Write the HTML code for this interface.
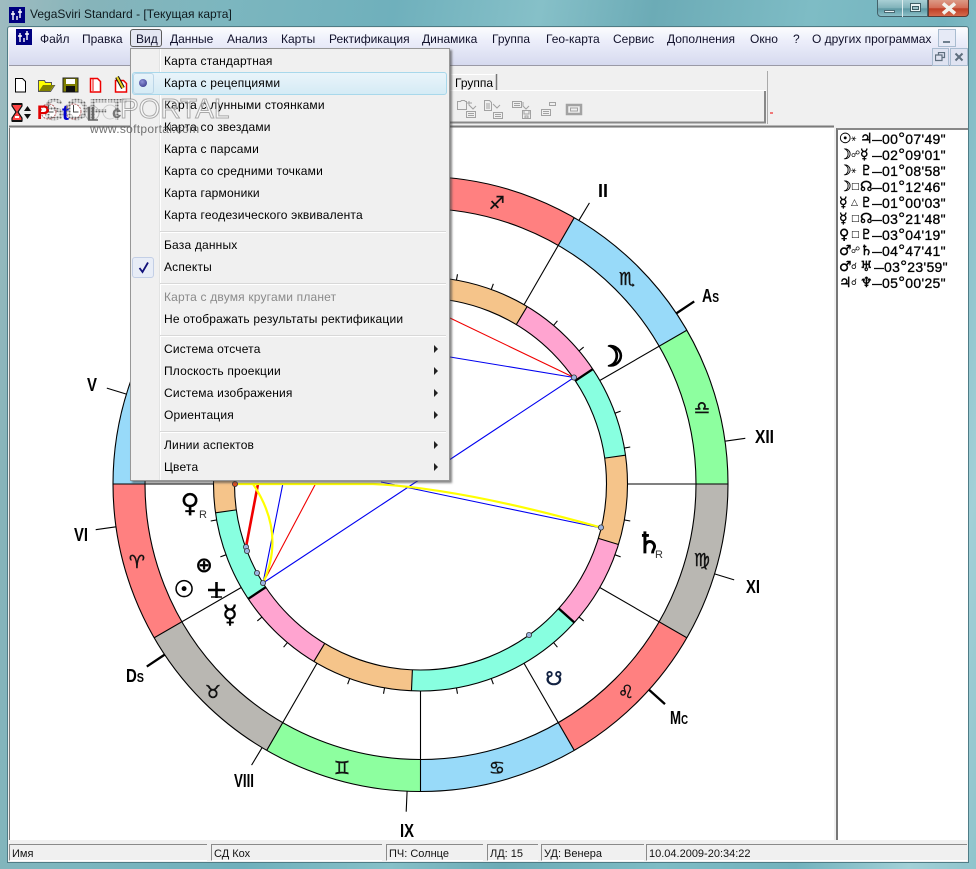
<!DOCTYPE html>
<html><head><meta charset="utf-8"><title>VegaSviri Standard</title>
<style>
html,body{margin:0;padding:0}
body{width:976px;height:869px;overflow:hidden;position:relative;font:12px "Liberation Sans","DejaVu Sans",sans-serif;color:#000;
background:linear-gradient(100deg,#9fbcc0 0,#86b4ba 8%,#7cb6bf 20%,#6fb0bc 35%,#86c0c8 48%,#6cabb6 58%,#7ebcc5 72%,#72b2bd 84%,#a2d0d7 94%,#8fc4cc 100%)}
.a{position:absolute;white-space:nowrap}
#client{left:8px;top:27px;width:960px;height:835px;background:#f0f0f0;box-shadow:0 0 0 1px #4f7c86;border-radius:2px 2px 0 0}
#menubar{left:9px;top:28px;width:958px;height:37px;background:linear-gradient(#fbfcfe 0,#eceefa 35%,#d6daef 100%);border-bottom:1px solid #9a9aa6}
.m{top:32px;line-height:14px;color:#10102a}
#content{left:10px;top:128px;width:824px;height:712px;background:#fff;box-shadow:-1px 0 0 #777}
#panel{left:836px;top:128px;background:#fff;border-left:2px solid #777;border-top:2px solid #888;width:130px;height:710px}
.st{top:844px;height:17px;line-height:18px;font-size:11px;background:#f0f0f0;border-top:1px solid #8a8a8a;border-left:1px solid #8a8a8a;border-bottom:1px solid #fff;padding-left:2px;box-sizing:border-box;color:#111}
#menu{left:130px;top:48px;width:318px;height:431px;background:#f0f0f0;border:1px solid #979797;box-shadow:2px 2px 2px rgba(70,70,70,.65)}
.i{left:164px;line-height:14px;color:#000;letter-spacing:.18px}
.sep{left:160px;width:286px;height:1px;background:#d8d8d8;border-bottom:1px solid #fff}
.arr{left:434px;width:0;height:0;border-left:4px solid #222;border-top:4px solid transparent;border-bottom:4px solid transparent}
.row{left:839px;height:16px;line-height:16px;font-size:14px;letter-spacing:.3px;color:#000;-webkit-text-stroke:.3px #000}
.p,.g{position:absolute;top:0;font-family:"DejaVu Sans",sans-serif;letter-spacing:0}
.p{font-size:14px;font-weight:bold;-webkit-text-stroke:.4px #000}
.g{font-size:9px;-webkit-text-stroke:0}
.t{position:absolute;left:33px;top:0}
.t b{display:inline-block;width:10px;overflow:hidden;font-weight:normal;vertical-align:top}
.t i{font-style:normal;font-size:17px;line-height:16px;vertical-align:top}
svg{position:absolute;overflow:hidden}
</style></head>
<body>
<!-- window title -->
<div class="a" id="client"></div>
<svg style="left:9px;top:7px" width="16" height="16"><rect width="16" height="16" fill="#000080"/><path d="M4 4v9M2 7h4M11 2v9M9 5h4M8 9v4" stroke="#fff" stroke-width="1.4"/></svg>
<div class="a" style="left:30px;top:7px;line-height:14px;color:#0e1a1e">VegaSviri Standard - [Текущая карта]</div>
<!-- caption buttons -->
<div class="a" style="left:877px;top:-1px;width:51px;height:18px;border:1px solid #43626a;border-radius:0 0 0 4px;box-sizing:border-box;background:linear-gradient(#a9cfd5,#80b2ba 50%,#5d98a3 55%,#8cc0c8)"></div>
<div class="a" style="left:902px;top:0;width:1px;height:17px;background:#dcecee"></div>
<div class="a" style="left:884px;top:10px;width:11px;height:3px;background:#e8f2f4;border:1px solid #4a6a72;box-sizing:border-box"></div>
<div class="a" style="left:910px;top:3px;width:11px;height:9px;border:1px solid #3e5e66;box-sizing:border-box;background:#e9f3f5"></div>
<div class="a" style="left:912px;top:6px;width:7px;height:4px;border:1px solid #3e5e66;box-sizing:border-box;background:#9cc2c9"></div>
<div class="a" style="left:928px;top:-1px;width:41px;height:18px;border:1px solid #5b3a34;border-radius:0 0 4px 0;box-sizing:border-box;background:linear-gradient(#dc9a86,#d4705a 48%,#bf3f26 55%,#d56a4c)"></div>
<svg style="left:940px;top:2px" width="18" height="13"><path d="M3 1.5L15 11.5M15 1.5L3 11.5" stroke="#f2f2ec" stroke-width="3.6"/></svg>

<!-- menu bar -->
<div class="a" id="menubar"></div>
<svg style="left:16px;top:29px" width="16" height="16"><rect width="16" height="16" fill="#000080"/><path d="M4 4v9M2 7h4M11 2v9M9 5h4M8 9v4" stroke="#fff" stroke-width="1.4"/></svg>
<div class="a m" style="left:40px">Файл</div>
<div class="a m" style="left:82px">Правка</div>
<div class="a" style="left:130px;top:29px;width:32px;height:18px;box-sizing:border-box;border:1px solid #5a5a5a;border-radius:3px;background:#e4e6f2"></div>
<div class="a m" style="left:136px">Вид</div>
<div class="a m" style="left:170px">Данные</div>
<div class="a m" style="left:227px">Анализ</div>
<div class="a m" style="left:281px">Карты</div>
<div class="a m" style="left:329px">Ректификация</div>
<div class="a m" style="left:422px">Динамика</div>
<div class="a m" style="left:492px">Группа</div>
<div class="a m" style="left:546px">Гео-карта</div>
<div class="a m" style="left:613px">Сервис</div>
<div class="a m" style="left:667px">Дополнения</div>
<div class="a m" style="left:750px">Окно</div>
<div class="a m" style="left:793px">?</div>
<div class="a m" style="left:812px">О других программах</div>
<!-- MDI buttons -->
<div class="a" style="left:938px;top:29px;width:18px;height:18px;box-sizing:border-box;border:1px solid #a9bcd0;background:#e6eaf6"></div>
<div class="a" style="left:943px;top:41px;width:7px;height:2px;background:#6e7f8e"></div>
<div class="a" style="left:932px;top:48px;width:17px;height:18px;box-sizing:border-box;border:1px solid #a9bcd0;background:#dfe3f1"></div>
<svg style="left:935px;top:52px" width="11" height="10"><path d="M3.5 2.5V.5h6v5h-2M.5 3h6.500v5.500h-6.500z" fill="none" stroke="#5f6f7e" stroke-width="1.200"/></svg>
<div class="a" style="left:950px;top:48px;width:18px;height:18px;box-sizing:border-box;border:1px solid #a9bcd0;background:#dfe3f1"></div>
<svg style="left:954px;top:52px" width="10" height="10"><path d="M1.500 1.500L8.500 8.500M8.500 1.500L1.500 8.500" stroke="#5f6f7e" stroke-width="2"/></svg>

<!-- toolbars -->
<svg style="left:0;top:66px" width="976" height="64">
 <path d="M15.500 12.500h7l3 3v10.500h-10z" fill="#fff" stroke="#000"/>
 <path d="M38.500 14.500h6l1 2h6v3h3l-4 6h-12z" fill="#ff0" stroke="#555"/><path d="M39 25l4-6h11l-4 6z" fill="#808000"/>
 <rect x="63" y="12" width="15" height="14" fill="#808000" stroke="#222"/><rect x="66" y="13" width="9" height="5" fill="#fff"/><rect x="66" y="20" width="9" height="6" fill="#111"/>
 <path d="M90.500 12.500h7l3 3v10.500h-10z" fill="#fff" stroke="#e00" stroke-width="1.500"/><path d="M93 13v12" stroke="#e00"/>
 <path d="M115.500 14.500h8l3 3v8.500h-11z" fill="#fff" stroke="#e00" stroke-width="1.500"/><path d="M117 11l6 11" stroke="#111" stroke-width="4"/><path d="M117 11l6 11" stroke="#e8d020" stroke-width="2"/>
 <path d="M12 38h10v2l-4 6 4 6v3H12v-3l4-6-4-6z" fill="#f44" stroke="#111" stroke-width="1.200"/><path d="M12 38h10M12 55h10" stroke="#111" stroke-width="2"/><path d="M15 50h4v2h-4z" fill="#fff"/>
 <path d="M24 45l3.500-5 3.500 5zM24 48l3.500 5 3.500-5z" fill="#111"/>
 <circle cx="48.500" cy="45.500" r="7.500" fill="#fff" stroke="#b06060" stroke-dasharray="2 1"/><path d="M48.500 39v7h5" stroke="#444" fill="none"/>
 <circle cx="73.500" cy="45.500" r="7.500" fill="#fff" stroke="#b06060" stroke-dasharray="2 1"/><path d="M73.500 39v7h5" stroke="#444" fill="none"/>
 <circle cx="92" cy="47" r="7" fill="none" stroke="#bbb"/><path d="M89 41v13M93 41v13" stroke="#666" stroke-width="2.500"/><path d="M88 54h10" stroke="#666" stroke-width="1.500"/>
 <circle cx="110" cy="46" r="7" fill="none" stroke="#ccc"/>
 <path d="M451 8.500h45" stroke="#fff"/><path d="M496.500 8v17" stroke="#777" stroke-width="1.500"/>
 <path d="M450 24.500h316" stroke="#fff"/><path d="M765 25v32" stroke="#888" stroke-width="2"/><path d="M450 56.500h316" stroke="#888" stroke-width="2"/>
 <path d="M767.500 5v53" stroke="#aaa"/><path d="M770 47h3" stroke="#e00"/>
 <path d="M9 60.500h825" stroke="#7a7a7a" stroke-width="2"/>
 <g fill="none" stroke="#a2a2a2">
  <path d="M457.500 35.500h3l1-1h3l1 1h1v8h-9zM469 35v4l4 4l3-3M467 37h5" />
  <rect x="466.500" y="45.500" width="9" height="6"/><path d="M468 47.500h6M468 49.500h6"/>
  <path d="M484.500 34.500h5l2 2v8h-7zM486 38h4M486 40h4M486 42h4M493 38l4 4 3-3"/>
  <rect x="493.500" y="46.500" width="9" height="6"/><path d="M495 48.500h6M495 50.500h6"/>
  <rect x="512.500" y="35.500" width="9" height="6"/><path d="M514 37.500h6M514 39.500h6M523 36v4l3 3 3-3"/>
  <rect x="522.500" y="44.500" width="8" height="8"/><path d="M524 45v3h5v-3M525 50h3v2h-3z"/>
  <rect x="541.500" y="43.500" width="9" height="6"/><path d="M543 45.500h6M543 47.500h6"/><rect x="549.500" y="36.500" width="6" height="3"/>
 </g>
 <rect x="567" y="39" width="14" height="9" fill="none" stroke="#a2a2a2" stroke-width="2.500"/><rect x="570.500" y="42" width="7" height="3" fill="none" stroke="#a2a2a2"/>
</svg>
<div class="a" style="left:37px;top:103px;font:bold 19px 'Liberation Sans',sans-serif;color:#e00000">P</div>
<div class="a" style="left:62px;top:102px;font:bold 21px 'Liberation Sans',sans-serif;color:#0000d0">t</div>
<div class="a" style="left:112px;top:103px;font:bold 17px 'Liberation Sans',sans-serif;color:#777">c</div>
<div class="a" style="left:455px;top:76px;line-height:14px">Группа</div>

<!-- chart -->
<div class="a" id="content"></div>
<svg style="left:10px;top:128px" width="824" height="712" viewBox="10 128 824 712">
 <g transform="translate(420.500 484)" fill="none">
  <g stroke-width="32" >
   <circle r="291.500" pathLength="360" stroke-dasharray="30 330" stroke="#8dff9f" transform="rotate(-30)"/>
   <circle r="291.500" pathLength="360" stroke-dasharray="30 330" stroke="#98daf9" transform="rotate(-60)"/>
   <circle r="291.500" pathLength="360" stroke-dasharray="30 330" stroke="#ff8080" transform="rotate(-90)"/>
   <circle r="291.500" pathLength="360" stroke-dasharray="30 330" stroke="#b9b7b2" transform="rotate(-120)"/>
   <circle r="291.500" pathLength="360" stroke-dasharray="30 330" stroke="#8dff9f" transform="rotate(-150)"/>
   <circle r="291.500" pathLength="360" stroke-dasharray="30 330" stroke="#98daf9" transform="rotate(-180)"/>
   <circle r="291.500" pathLength="360" stroke-dasharray="30 330" stroke="#ff8080" transform="rotate(-210)"/>
   <circle r="291.500" pathLength="360" stroke-dasharray="30 330" stroke="#b9b7b2" transform="rotate(-240)"/>
   <circle r="291.500" pathLength="360" stroke-dasharray="30 330" stroke="#8dff9f" transform="rotate(-270)"/>
   <circle r="291.500" pathLength="360" stroke-dasharray="30 330" stroke="#98daf9" transform="rotate(-300)"/>
   <circle r="291.500" pathLength="360" stroke-dasharray="30 330" stroke="#ff8080" transform="rotate(-330)"/>
   <circle r="291.500" pathLength="360" stroke-dasharray="30 330" stroke="#b9b7b2" transform="rotate(-360)"/>
  </g>
  <g stroke-width="21">
   <circle r="196.500" pathLength="360" stroke-dasharray="25.700 334.300" stroke="#88ffe0" transform="rotate(-33.700)"/>
   <circle r="196.500" pathLength="360" stroke-dasharray="25.300 334.700" stroke="#ffa4d0" transform="rotate(-59)"/>
   <circle r="196.500" pathLength="360" stroke-dasharray="28.500 331.500" stroke="#f5c48a" transform="rotate(-87.500)"/>
   <circle r="196.500" pathLength="360" stroke-dasharray="50.500 309.500" stroke="#88ffe0" transform="rotate(-138)"/>
   <circle r="196.500" pathLength="360" stroke-dasharray="25 335" stroke="#ffa4d0" transform="rotate(-163)"/>
   <circle r="196.500" pathLength="360" stroke-dasharray="25 335" stroke="#f5c48a" transform="rotate(-188)"/>
   <circle r="196.500" pathLength="360" stroke-dasharray="25.700 334.300" stroke="#88ffe0" transform="rotate(-213.700)"/>
   <circle r="196.500" pathLength="360" stroke-dasharray="25.300 334.700" stroke="#ffa4d0" transform="rotate(-239)"/>
   <circle r="196.500" pathLength="360" stroke-dasharray="28.500 331.500" stroke="#f5c48a" transform="rotate(-267.500)"/>
   <circle r="196.500" pathLength="360" stroke-dasharray="50.500 309.500" stroke="#88ffe0" transform="rotate(-318)"/>
   <circle r="196.500" pathLength="360" stroke-dasharray="25 335" stroke="#ffa4d0" transform="rotate(-343)"/>
   <circle r="196.500" pathLength="360" stroke-dasharray="25 335" stroke="#f5c48a" transform="rotate(-368)"/>
  </g>
  <g stroke="#000" stroke-width="1.100">
   <circle r="307.500"/><circle r="275.500"/><circle r="207"/><circle r="186"/>
   <path d="M207 0H307.500"/>
   <path d="M207 0H307.500" transform="rotate(-30)"/><path d="M207 0H307.500" transform="rotate(-60)"/><path d="M207 0H307.500" transform="rotate(-90)"/>
   <path d="M207 0H307.500" transform="rotate(-120)"/><path d="M207 0H307.500" transform="rotate(-150)"/><path d="M207 0H307.500" transform="rotate(-180)"/>
   <path d="M207 0H307.500" transform="rotate(-210)"/><path d="M207 0H307.500" transform="rotate(-240)"/><path d="M207 0H307.500" transform="rotate(-270)"/>
   <path d="M207 0H307.500" transform="rotate(-300)"/><path d="M207 0H307.500" transform="rotate(-330)"/>
   <path d="M186 0H207M307.500 0H328" transform="rotate(-8)"/>
   <path d="M186 0H207M307.500 0H328" transform="rotate(-59)"/>
   <path d="M186 0H207M307.500 0H328" transform="rotate(-87.500)"/>
   <path d="M186 0H207M307.500 0H328" transform="rotate(-163)"/>
   <path d="M186 0H207M307.500 0H328" transform="rotate(-188)"/>
   <path d="M186 0H207M307.500 0H328" transform="rotate(-239)"/>
   <path d="M186 0H207M307.500 0H328" transform="rotate(-267.500)"/>
   <path d="M186 0H207M307.500 0H328" transform="rotate(-343)"/>
   <g stroke-width="2.300">
    <path d="M186 0H207M307.500 0H329" transform="rotate(-33.700)"/>
    <path d="M186 0H207M307.500 0H329" transform="rotate(-138)"/>
    <path d="M186 0H207M307.500 0H329" transform="rotate(-213.700)"/>
    <path d="M186 0H207M307.500 0H329" transform="rotate(-318)"/>
   </g>
   <path d="M207 0H213" transform="rotate(-10)"/><path d="M207 0H213" transform="rotate(-20)"/><path d="M207 0H213" transform="rotate(-40)"/><path d="M207 0H213" transform="rotate(-50)"/>
   <path d="M207 0H213" transform="rotate(-70)"/><path d="M207 0H213" transform="rotate(-80)"/><path d="M207 0H213" transform="rotate(-100)"/><path d="M207 0H213" transform="rotate(-110)"/>
   <path d="M207 0H213" transform="rotate(-130)"/><path d="M207 0H213" transform="rotate(-140)"/><path d="M207 0H213" transform="rotate(-160)"/><path d="M207 0H213" transform="rotate(-170)"/>
   <path d="M207 0H213" transform="rotate(-190)"/><path d="M207 0H213" transform="rotate(-200)"/><path d="M207 0H213" transform="rotate(-220)"/><path d="M207 0H213" transform="rotate(-230)"/>
   <path d="M207 0H213" transform="rotate(-250)"/><path d="M207 0H213" transform="rotate(-260)"/><path d="M207 0H213" transform="rotate(-280)"/><path d="M207 0H213" transform="rotate(-290)"/>
   <path d="M207 0H213" transform="rotate(-310)"/><path d="M207 0H213" transform="rotate(-320)"/><path d="M207 0H213" transform="rotate(-340)"/><path d="M207 0H213" transform="rotate(-350)"/>
  </g>
 </g>
 <!-- aspect lines -->
 <g fill="none">
  <path d="M574 377.500L263 583M574 377.500L450 357M381 482L601 528M263 583L283 483" stroke="#0000f0" stroke-width="1.100"/>
  <path d="M574 377.500L450 318M263 583L316 483" stroke="#f00000" stroke-width="1.100"/>
  <path d="M246 547L258 484" stroke="#f00000" stroke-width="2.600"/>
  <path d="M263 583Q286 533 253 484M238 484H373Q460 488 601 527.500" stroke="#ffff00" stroke-width="2.200"/>
 </g>
 <g fill="#9cb4e0" stroke="#333" stroke-width=".8">
  <circle cx="574" cy="377.500" r="2.600"/><circle cx="601" cy="527.500" r="2.600"/><circle cx="529" cy="635" r="2.600"/>
  <circle cx="263" cy="583" r="2.600"/><circle cx="257" cy="573" r="2.600"/><circle cx="246" cy="547" r="2.600"/><circle cx="247" cy="551" r="2.600"/>
  <circle cx="235" cy="484" r="2.600" fill="#e05020"/>
 </g>
 <!-- sign glyphs -->
 <g font-family="'DejaVu Sans',sans-serif" font-size="18" text-anchor="middle" fill="#111" stroke="#111" stroke-width=".4">
  <text x="497" y="209">♐&#xFE0E;</text><text x="627" y="285">♏&#xFE0E;</text><text x="702" y="414">♎&#xFE0E;</text>
  <text x="702" y="566">♍&#xFE0E;</text><text x="626" y="698">♌&#xFE0E;</text><text x="497" y="774">♋&#xFE0E;</text>
  <text x="342" y="774">♊&#xFE0E;</text><text x="213" y="698">♉&#xFE0E;</text><text x="137" y="568">♈&#xFE0E;</text>
 </g>
 <!-- planets -->
 <g font-family="'DejaVu Sans',sans-serif" text-anchor="middle" fill="#000" stroke="#000" font-weight="bold">
  <text x="611" y="366" font-size="28" stroke-width="1.600">☽&#xFE0E;</text>
  <text x="649" y="553" font-size="29" stroke-width=".8">♄&#xFE0E;</text>
  <text x="190" y="512" font-size="26" stroke-width=".3">♀&#xFE0E;</text>
  <text x="204" y="572" font-size="21" stroke-width=".2">⊕</text>
  <text x="184" y="597" font-size="23" stroke-width=".7">☉&#xFE0E;</text>
  <text x="230" y="623" font-size="25" stroke-width=".5">☿&#xFE0E;</text>
  <text x="554" y="685" font-size="19" font-weight="normal" fill="#102040" stroke="#102040" stroke-width=".5">☋&#xFE0E;</text>
 </g>
 <path d="M216.500 582v16M208 590h17" stroke="#000" stroke-width="2.600" fill="none"/><path d="M211 597h11" stroke="#000" stroke-width="1.400"/>
 <g font-family="'Liberation Sans',sans-serif" font-size="11" fill="#333"><text x="199" y="518">R</text><text x="655" y="558">R</text></g>
 <!-- house labels -->
 <g font-family="'Liberation Sans',sans-serif" font-weight="bold" font-size="18" fill="#000">
  <text x="598" y="197" textLength="10" lengthAdjust="spacingAndGlyphs">II</text>
  <text x="702" y="302" textLength="17" lengthAdjust="spacingAndGlyphs">A<tspan font-size="13">S</tspan></text>
  <text x="755" y="443" textLength="19" lengthAdjust="spacingAndGlyphs">XII</text>
  <text x="746" y="593" textLength="14" lengthAdjust="spacingAndGlyphs">XI</text>
  <text x="670" y="724" textLength="18" lengthAdjust="spacingAndGlyphs">M<tspan font-size="13">C</tspan></text>
  <text x="400" y="837" textLength="14" lengthAdjust="spacingAndGlyphs">IX</text>
  <text x="234" y="787" textLength="20" lengthAdjust="spacingAndGlyphs">VIII</text>
  <text x="126" y="682" textLength="18" lengthAdjust="spacingAndGlyphs">D<tspan font-size="13">S</tspan></text>
  <text x="74" y="541" textLength="14" lengthAdjust="spacingAndGlyphs">VI</text>
  <text x="87" y="391" textLength="10" lengthAdjust="spacingAndGlyphs">V</text>
 </g>
</svg>

<!-- aspects panel -->
<div class="a" id="panel"></div>
<div class="a row" style="top:131px"><span class="p">☉&#xFE0E;</span><span class="g" style="left:12px">⚹</span><span class="p" style="left:21px">♃&#xFE0E;</span><span class="t"><b>—</b>00<i>°</i>07'49"</span></div>
<div class="a row" style="top:147px"><span class="p">☽&#xFE0E;</span><span class="g" style="left:12px">☍</span><span class="p" style="left:21px">☿&#xFE0E;</span><span class="t"><b>—</b>02<i>°</i>09'01"</span></div>
<div class="a row" style="top:163px"><span class="p">☽&#xFE0E;</span><span class="g" style="left:12px">⚹</span><span class="p" style="left:21px">♇&#xFE0E;</span><span class="t"><b>—</b>01<i>°</i>08'58"</span></div>
<div class="a row" style="top:179px"><span class="p">☽&#xFE0E;</span><span class="g" style="left:12px">□</span><span class="p" style="left:21px">☊&#xFE0E;</span><span class="t"><b>—</b>01<i>°</i>12'46"</span></div>
<div class="a row" style="top:195px"><span class="p">☿&#xFE0E;</span><span class="g" style="left:12px">△</span><span class="p" style="left:21px">♇&#xFE0E;</span><span class="t"><b>—</b>01<i>°</i>00'03"</span></div>
<div class="a row" style="top:211px"><span class="p">☿&#xFE0E;</span><span class="g" style="left:12px">□</span><span class="p" style="left:21px">☊&#xFE0E;</span><span class="t"><b>—</b>03<i>°</i>21'48"</span></div>
<div class="a row" style="top:227px"><span class="p">♀&#xFE0E;</span><span class="g" style="left:12px">□</span><span class="p" style="left:21px">♇&#xFE0E;</span><span class="t"><b>—</b>03<i>°</i>04'19"</span></div>
<div class="a row" style="top:243px"><span class="p">♂&#xFE0E;</span><span class="g" style="left:12px">☍</span><span class="p" style="left:21px">♄&#xFE0E;</span><span class="t"><b>—</b>04<i>°</i>47'41"</span></div>
<div class="a row" style="top:259px"><span class="p">♂&#xFE0E;</span><span class="g" style="left:12px">☌</span><span class="p" style="left:21px">♅&#xFE0E;</span><span class="t" style="left:35px"><b>—</b>03<i>°</i>23'59"</span></div>
<div class="a row" style="top:275px"><span class="p">♃&#xFE0E;</span><span class="g" style="left:12px">☌</span><span class="p" style="left:21px">♆&#xFE0E;</span><span class="t"><b>—</b>05<i>°</i>00'25"</span></div>

<!-- status bar -->
<div class="a st" style="left:9px;width:198px">Имя</div>
<div class="a st" style="left:211px;width:171px">СД Кох</div>
<div class="a st" style="left:386px;width:97px">ПЧ: Солнце</div>
<div class="a st" style="left:487px;width:51px">ЛД: 15</div>
<div class="a st" style="left:541px;width:103px">УД: Венера</div>
<div class="a st" style="left:646px;width:321px">10.04.2009-20:34:22</div>

<!-- dropdown -->
<div class="a" id="menu"></div>
<div class="a" style="left:159px;top:49px;width:1px;height:431px;background:#e2e3e3;border-right:1px solid #fff"></div>
<div class="a" style="left:132px;top:72px;width:315px;height:23px;box-sizing:border-box;border:1px solid #a8d8eb;border-radius:3px;background:linear-gradient(#e9f4fa,#d5ebf5)"></div>
<div class="a" style="left:133px;top:73px;width:21px;height:21px;box-sizing:border-box;border:1px solid #bcd6e8;border-radius:3px"></div>
<div class="a" style="left:139px;top:79px;width:8px;height:8px;border-radius:50%;background:radial-gradient(circle at 40% 35%,#8f93d8,#2a2c80)"></div>
<div class="a" style="left:132px;top:257px;width:22px;height:21px;box-sizing:border-box;border:1px solid #c3cfe6;border-radius:3px;background:#e8edf7"></div>
<svg style="left:138px;top:261px" width="12" height="13"><path d="M1.500 7l3 4L10 1.500" fill="none" stroke="#10107a" stroke-width="1.800"/></svg>
<div class="a i" style="top:54px">Карта стандартная</div>
<div class="a i" style="top:76px">Карта с рецепциями</div>
<div class="a i" style="top:98px">Карта с лунными стоянками</div>
<div class="a i" style="top:120px">Карта со звездами</div>
<div class="a i" style="top:142px">Карта с парсами</div>
<div class="a i" style="top:164px">Карта со средними точками</div>
<div class="a i" style="top:186px">Карта гармоники</div>
<div class="a i" style="top:208px">Карта геодезического эквивалента</div>
<div class="a sep" style="top:231px"></div>
<div class="a i" style="top:238px">База данных</div>
<div class="a i" style="top:260px">Аспекты</div>
<div class="a sep" style="top:283px"></div>
<div class="a i" style="top:290px;color:#8a8a8a">Карта с двумя кругами планет</div>
<div class="a i" style="top:312px">Не отображать результаты ректификации</div>
<div class="a sep" style="top:335px"></div>
<div class="a i" style="top:342px">Система отсчета</div><div class="a arr" style="top:345px"></div>
<div class="a i" style="top:364px">Плоскость проекции</div><div class="a arr" style="top:367px"></div>
<div class="a i" style="top:386px">Система изображения</div><div class="a arr" style="top:389px"></div>
<div class="a i" style="top:408px">Ориентация</div><div class="a arr" style="top:411px"></div>
<div class="a sep" style="top:431px"></div>
<div class="a i" style="top:438px">Линии аспектов</div><div class="a arr" style="top:441px"></div>
<div class="a i" style="top:460px">Цвета</div><div class="a arr" style="top:463px"></div>

<!-- watermark -->
<div class="a" style="left:44px;top:92px;font:bold 31px 'Liberation Sans',sans-serif;color:transparent;background:radial-gradient(circle,#666 0 1px,transparent 1.200px) 0 0/3px 3px;-webkit-background-clip:text;background-clip:text">SOFT</div>
<div class="a" style="left:120px;top:93px;font:28px 'Liberation Sans',sans-serif;color:rgba(255,255,255,.55);-webkit-text-stroke:1px rgba(110,110,110,.55)">PORTAL</div>
<div class="a" style="left:90px;top:122px;font:12px 'Liberation Sans',sans-serif;color:rgba(90,90,90,.85);letter-spacing:.3px">www.softportal.com</div>
</body></html>
